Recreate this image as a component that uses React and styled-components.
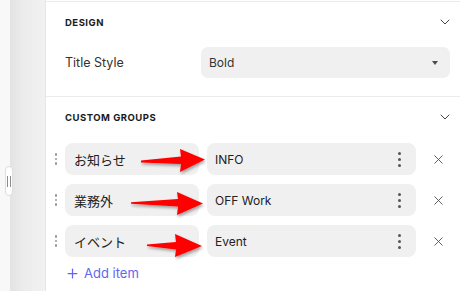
import React from 'react';
import styled, { createGlobalStyle } from 'styled-components';
import { ChevronDown, Plus, X } from 'lucide-react';

const GlobalStyle = createGlobalStyle`
  html, body {
    margin: 0;
    padding: 0;
    background: #ffffff;
  }
  body {
    font-family: Inter, "Noto Sans CJK JP", sans-serif;
    color: #333;
  }
`

const Page = styled.div`
  position: relative;
  display: flex;
  width: 460px;
  height: 291px;
  overflow: hidden;
`

const Sidebar = styled.aside`
  position: relative;
  display: flex;
  width: 46px;
  flex-shrink: 0;
  background: #f8f8f8;
  border-right: 1px solid #e6e6e6;
  box-sizing: border-box;
`

const SidebarShade = styled.div`
  margin-left: 10px;
  flex: 1;
  background: linear-gradient(90deg, #e3e3e3 0%, #ececec 40%, #f1f1f1 100%);
`

const ResizeHandle = styled.div`
  position: absolute;
  left: 5px;
  top: 166px;
  width: 8px;
  height: 30px;
  border-radius: 5px;
  background: #fff;
  border: 1px solid #dedede;
  box-sizing: border-box;
  display: flex;
  align-items: center;
  justify-content: center;
  gap: 1.5px;
  &::before, &::after {
    content: "";
    width: 1px;
    height: 11px;
    background: #8a8a8a;
  }
`

const Panel = styled.main`
  flex: 1;
  margin-top: 1px;
  border-top: 1px solid #ececec;
  background: #fff;
`

const Section = styled.section`
  padding: 0 10px 0 19px;
  border-bottom: ${p => (p.$divider ? '1px solid #ececec' : 'none')};
  padding-bottom: ${p => p.$bottom}px;
`

const SectionHeader = styled.div`
  display: flex;
  align-items: center;
  justify-content: space-between;
  height: 40px;
`

const SectionTitle = styled.h2`
  margin: 0;
  font-size: 9.5px;
  font-weight: 700;
  letter-spacing: 0.5px;
  color: #1a1a1a;
  text-transform: uppercase;
`

const Chevron = styled(ChevronDown)`
  color: #444;
  margin-right: -3px;
`

const FieldRow = styled.div`
  display: flex;
  align-items: center;
  margin-top: 5px;
`

const FieldLabel = styled.label`
  width: 136px;
  font-size: 12.5px;
  color: #333;
`

const Select = styled.div`
  flex: 1;
  height: 31px;
  display: flex;
  align-items: center;
  justify-content: space-between;
  padding: 0 12px 0 8px;
  border-radius: 7px;
  background: #f0f0f0;
  font-size: 12px;
  color: #333;
  &::after {
    content: "";
    border-left: 3.5px solid transparent;
    border-right: 3.5px solid transparent;
    border-top: 4px solid #4a4a5a;
  }
`

const GroupList = styled.div`
  display: flex;
  flex-direction: column;
  gap: 9px;
  margin-top: 6px;
`

const GroupRow = styled.div`
  display: flex;
  align-items: center;
  margin-left: -14px;
  height: 32px;
`

const DragHandle = styled.div`
  width: 10px;
  margin-right: 4px;
  display: flex;
  flex-direction: column;
  align-items: center;
  gap: 2px;
  & > span {
    width: 2.5px;
    height: 2.5px;
    border-radius: 1px;
    background: #999;
  }
`

const Input = styled.div`
  position: relative;
  display: flex;
  align-items: center;
  justify-content: space-between;
  box-sizing: border-box;
  height: 32px;
  width: ${p => (p.$wide ? '209px' : '134px')};
  margin-left: ${p => (p.$wide ? '8px' : '0')};
  padding: 0 15px 0 ${p => (p.$wide ? '8px' : '9px')};
  border-radius: 8px;
  background: #f0f0f0;
  font-size: ${p => (p.$wide ? '12px' : '13px')};
  color: #222;
`

const Kebab = styled.div`
  display: flex;
  flex-direction: column;
  gap: 3px;
  & > span {
    width: 3px;
    height: 3px;
    border-radius: 50%;
    background: #555;
  }
`

const RemoveButton = styled.button`
  width: 24px;
  margin-left: 10px;
  padding: 0;
  border: 0;
  background: none;
  display: flex;
  justify-content: center;
  color: #555;
`

const AddItem = styled.button`
  display: flex;
  align-items: center;
  gap: 4px;
  height: 22px;
  margin-top: 5px;
  padding: 0;
  border: 0;
  background: none;
  font-family: inherit;
  font-size: 13px;
  color: #6366f1;
`

const Annotations = styled.svg`
  position: absolute;
  left: 0;
  top: 0;
  pointer-events: none;
`

const groups = [
  { name: 'お知らせ', value: 'INFO' },
  { name: '業務外', value: 'OFF Work' },
  { name: 'イベント', value: 'Event' },
];

const arrows = [
  '141,160.6 181,156.6 180,149 205,159.5 180,172 181,164 141,162.4',
  '131,202.2 178,199 177,192 203,203.5 177,215 178,206.5 131,203.8',
  '147,244.4 176,242 175,234 202,246 175,257 176,249.5 147,246',
];

const Dots = ({ count = 3 }) => Array.from({ length: count }, (_, i) => <span key={i} />);

export default function App() {
  return (
    <Page>
      <GlobalStyle />
      <Sidebar>
        <SidebarShade />
        <ResizeHandle />
      </Sidebar>
      <Panel>
        <Section $divider $bottom={18}>
          <SectionHeader>
            <SectionTitle>Design</SectionTitle>
            <Chevron size={16} strokeWidth={1.5} />
          </SectionHeader>
          <FieldRow>
            <FieldLabel>Title Style</FieldLabel>
            <Select>Bold</Select>
          </FieldRow>
        </Section>
        <Section $bottom={0}>
          <SectionHeader>
            <SectionTitle>Custom Groups</SectionTitle>
            <Chevron size={16} strokeWidth={1.5} />
          </SectionHeader>
          <GroupList>
            {groups.map(g => (
              <GroupRow key={g.value}>
                <DragHandle><Dots /></DragHandle>
                <Input>{g.name}</Input>
                <Input $wide>
                  {g.value}
                  <Kebab><Dots /></Kebab>
                </Input>
                <RemoveButton><X size={15} strokeWidth={1.5} /></RemoveButton>
              </GroupRow>
            ))}
          </GroupList>
          <AddItem>
            <Plus size={15} strokeWidth={2} />
            Add item
          </AddItem>
        </Section>
      </Panel>
      <Annotations width="460" height="291" viewBox="0 0 460 291">
        <defs>
          <filter id="shadow" x="-20%" y="-40%" width="140%" height="180%">
            <feDropShadow dx="1" dy="2" stdDeviation="1.5" floodColor="#000" floodOpacity="0.35" />
          </filter>
        </defs>
        {arrows.map((pts, i) => (
          <polygon key={i} points={pts} fill="#ff0000" filter="url(#shadow)" />
        ))}
      </Annotations>
    </Page>
  );
}
